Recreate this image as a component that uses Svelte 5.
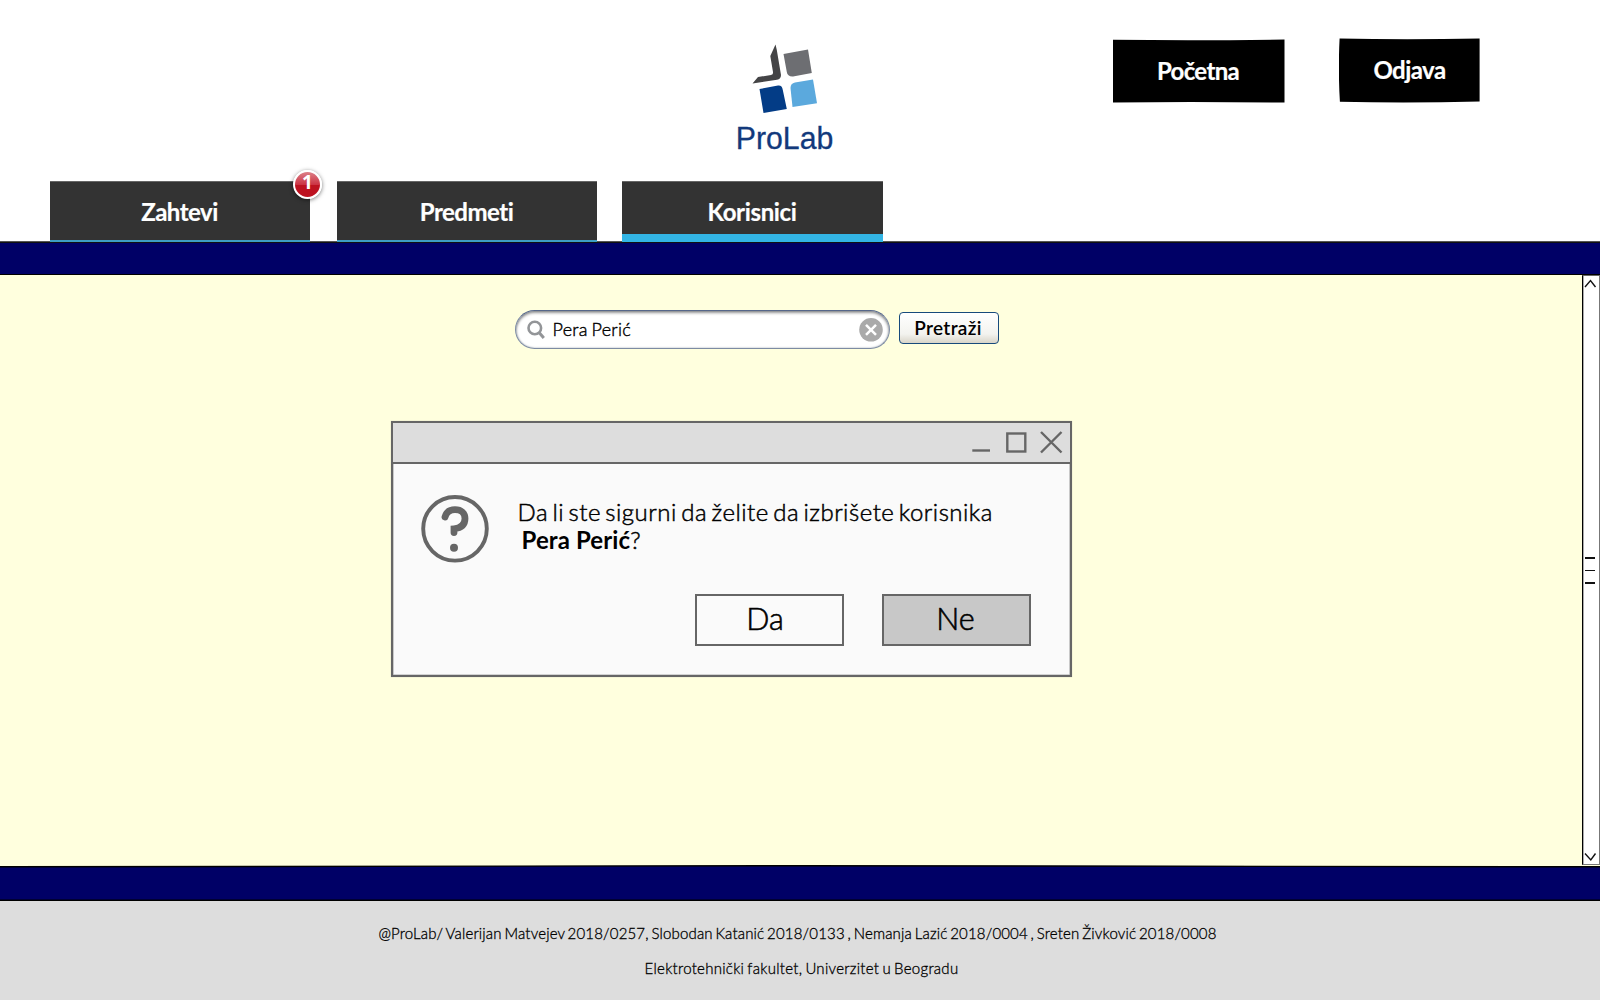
<script>
  const tabs = [
    { label: 'Zahtevi', badge: 1 },
    { label: 'Predmeti' },
    { label: 'Korisnici', active: true }
  ];
</script>

<div class="page">
  <header>
    <div class="top">
      <svg class="logo" width="130" height="130" viewBox="0 0 130 130">
        <path d="M55.5 14.5 56.8 20 61 45Q61 49 57 49.7L32.5 53.5 38 47 51 45Q53.5 44.5 53 42L50.3 26Z" fill="#444446" />
        <path d="M63.5 24 88 19.5 91.8 43 73 46.4Q67.5 46.7 66.8 42Z" fill="#6d6e72" />
        <path d="M39.5 59 58 55.6Q62 55 62.8 60L66.8 79 43.5 83Z" fill="#033c86" />
        <path d="M70.5 58Q70.5 53.5 75 52.6L93 49.6 97 73.3 72.5 77Z" fill="#5ba9dd" />
        <text x="15.8" y="118.8" textLength="97.5" lengthAdjust="spacingAndGlyphs">ProLab</text>
      </svg>
      <button class="home">
        <svg width="172" height="64" viewBox="0 0 172 64"><path d="M0 .8Q86 1.8 171.5 .5L171.5 63.6Q86 62.4 0 63.4Z" /></svg>
        <span>Početna</span>
      </button>
      <button class="logout">
        <svg width="142" height="66" viewBox="0 0 142 66"><path d="M.6 .5Q70 2 140.6 .4L140.6 63.5Q70 65.3 .9 63.8Q-1 32 .6 .5Z" /></svg>
        <span>Odjava</span>
      </button>
    </div>
    <nav>
      {#each tabs as tab}
        <div class="tab" class:active={tab.active}>
          <span>{tab.label}</span>
          {#if tab.badge}<b class="badge">{tab.badge}</b>{/if}
        </div>
      {/each}
    </nav>
  </header>

  <div class="band"></div>

  <main>
    <section class="content">
      <div class="search">
        <div class="field">
          <svg width="18" height="20" viewBox="0 0 18 20" fill="none" stroke="#939598">
            <circle cx="7.8" cy="8" r="6.3" stroke-width="2.6" />
            <path d="M12.3 12.7 16.8 18" stroke-width="3" />
          </svg>
          <span class="query">Pera Perić</span>
          <svg class="clear" width="24" height="24" viewBox="0 0 24 24">
            <circle cx="12" cy="11.8" r="11.8" fill="#aaa" />
            <path d="M7 6.8 17 16.8M17 6.8 7 16.8" stroke="#fff" stroke-width="2.5" />
          </svg>
        </div>
        <button class="go"><span>Pretraži</span></button>
      </div>

      <div class="dialog">
        <div class="titlebar">
          <svg width="92" height="26" viewBox="0 0 92 26" fill="none" stroke="#666" stroke-width="2.4">
            <path d="M.3 21.5H18" />
            <rect x="35.3" y="4.5" width="18" height="18" />
            <path d="M69 3 89.5 23.5M89.5 3 69 23.5" />
          </svg>
        </div>
        <div class="body">
          <svg class="question" width="68" height="68" viewBox="0 0 68 68" fill="none" stroke="#666">
            <circle cx="34" cy="33.8" r="31.8" stroke-width="3.9" />
            <path d="M24 22Q26 14.7 34 14.7C40.5 14.7 44 18.5 44 23.5C44 29.5 40 33 33 33.8V37.5" stroke-width="6.8" stroke-linecap="round" stroke-linejoin="miter" />
            <circle cx="33" cy="52.8" r="4" fill="#666" stroke="none" />
          </svg>
          <div class="message">
            <p class="ask">Da li ste sigurni da želite da izbrišete korisnika</p>
            <p class="who"><b>Pera Perić</b>?</p>
          </div>
        </div>
        <div class="actions">
          <button class="yes"><span>Da</span></button>
          <button class="chosen"><span>Ne</span></button>
        </div>
      </div>
    </section>
    <aside>
      <svg width="13" height="10" viewBox="0 0 13 10"><path d="M1 8 6.5 1.5 11.5 8" /></svg>
      <div class="grip"><i></i><i></i><i></i></div>
      <svg width="13" height="10" viewBox="0 0 13 10"><path d="M1 1.5 6.8 8 11.5 1.5" /></svg>
    </aside>
  </main>

  <svg class="lower" width="1600" height="36" viewBox="0 0 1600 36">
    <path d="M-2 1.8Q800 -.3 1602 1.8V35.3H-2Z" />
  </svg>

  <footer>
    <p class="authors">@ProLab/ Valerijan Matvejev 2018/0257, Slobodan Katanić 2018/0133 , Nemanja Lazić 2018/0004 , Sreten Živković 2018/0008</p>
    <p class="school">Elektrotehnički fakultet, Univerzitet u Beogradu</p>
  </footer>
</div>

<style>
  :global(body) { margin: 0; overflow: hidden; }
  * { box-sizing: border-box; }
  p { margin: 0; white-space: pre; }
  svg { display: block; flex: none; }
  button { font: inherit; margin: 0; padding: 0; border: 0; background: none; white-space: nowrap; }
  .page { width: 1600px; height: 1000px; display: flex; flex-direction: column; background: #fff; font-family: Lato, "Liberation Sans", sans-serif; font-variant-ligatures: none; color: #000; }

  header { height: 242px; flex: none; display: flex; flex-direction: column; background: linear-gradient(#555, #555) bottom / 100% 1px no-repeat; }
  .top { height: 181px; flex: none; display: flex; align-items: flex-start; padding: 30px 0 0 720px; }
  .logo text { font: 32px "Liberation Sans", sans-serif; fill: #12397c; stroke: #12397c; stroke-width: .3; }
  .home, .logout { display: grid; place-items: center; color: #fff; font-size: 24px; font-weight: 700; letter-spacing: -.65px; -webkit-text-stroke: .2px #fff; }
  .home > *, .logout > * { grid-area: 1 / 1; }
  .home span { padding: 0 2px 1px 0; }
  .logout span { padding-bottom: 3px; letter-spacing: -.55px; }
  .home { margin: 9px 0 0 263px; }
  .logout { margin: 8px 0 0 53.5px; }
  nav { display: flex; gap: 27px; padding-left: 50px; height: 61px; }
  .tab { position: relative; width: 260px; height: 61px; padding: 14.5px 1px 0 0; background: #333; color: #fff; border-top: 1px solid #666; border-bottom: 2px solid #3d9ec4; font-size: 24px; line-height: 29px; font-weight: 700; letter-spacing: -.5px; text-align: center; }
  .tab > span { -webkit-text-stroke: .2px #fff; }
  .tab.active { border-bottom: 8px solid #33b5e5; margin-left: -2px; width: 261px; letter-spacing: -.35px; }
  .badge { position: absolute; right: -12px; top: -12.5px; width: 29px; height: 29px; border: 2.5px solid #fff; border-radius: 50%; background: linear-gradient(#dc8088, #cc3444 50%, #bd1220 51%, #bd1220); box-shadow: 0 1px 4px #0008; font: 700 19px/21px "Open Sans", sans-serif; letter-spacing: 0; }

  .band { flex: none; height: 33px; background: #006; border: solid #111; border-width: 1px 0; border-bottom-color: #000; }
  .lower { background: #ffffde; }
  .lower path { fill: #006; stroke: #000; stroke-width: 1.4; }
  main { height: 590px; flex: none; display: flex; background: #ffffde; }
  .content { width: 1582px; padding: 35px 0 0 391px; }
  .search { display: flex; align-items: center; gap: 9px; padding-left: 124px; height: 39px; }
  .field { width: 375px; height: 39px; display: flex; align-items: center; padding: 0 6px 0 11px; background: #fff; border: 1.5px solid #7d8ba3; border-top-color: #56678a; border-radius: 20px; box-shadow: inset 0 2px 3px #0006, inset 0 0 2px #5678; }
  .query { font-size: 18px; font-weight: 300; -webkit-text-stroke: .4px #000; margin-left: 7.5px; padding-bottom: 1.5px; letter-spacing: .3px; word-spacing: -1.5px; }
  .clear { margin-left: auto; }
  .go { width: 100px; height: 32px; margin-top: -3px; padding: 0 2px 2px 0; border: 1.5px solid #174a7c; border-radius: 4px; background: linear-gradient(#fff, #f3f3ef 70%, #d9d5c9); font-size: 19px; font-weight: 600; letter-spacing: .35px; }

  .dialog { width: 681px; height: 256px; margin-top: 72px; background: #fafafa; border: 2px solid #666; box-shadow: inset 0 0 0 .6px #6668, 0 0 1px #6666; }
  .titlebar { height: 41px; display: flex; justify-content: flex-end; padding: 6px 6px 0 0; background: #ddd; border-bottom: 2px solid #666; }
  .body { display: flex; height: 130px; padding: 31px 0 0 28px; }
  .message { padding: 2px 0 0 28.5px; font-size: 24px; line-height: 29px; font-weight: 300; -webkit-text-stroke: .5px #000; }
  .ask { letter-spacing: .5px; word-spacing: -2.6px; }
  .who { padding-left: 4px; font-size: 24px; margin-top: -1px; }
  .who b { font-weight: 700; letter-spacing: .1px; -webkit-text-stroke: 0; }
  .actions { display: flex; justify-content: flex-end; gap: 38px; padding-right: 39px; }
  .actions button { width: 149px; height: 52px; border: 2px solid #666; font-size: 30.5px; font-weight: 300; -webkit-text-stroke: .6px #000; padding: 0 2px 4px 0; }
  .actions .yes { padding-right: 9px; }
  .actions .chosen { background: #c8c8c8; }

  aside { width: 18px; display: flex; flex-direction: column; justify-content: space-between; align-items: center; padding: 3px 2px 2px 0; background: #fff; border: solid #000; border-width: 1px; border-top-color: #666; border-right-color: #777; border-bottom-color: #777; box-shadow: inset 1px 0 #aaa; }
  aside svg { fill: none; stroke: #111; stroke-width: 1.4; }
  .grip { display: flex; flex-direction: column; gap: 11px; }
  .grip i { width: 10px; height: 1.5px; background: #111; }

  footer { flex: 1; background: #ddd; text-align: center; font-size: 15px; line-height: 18px; padding-top: 23px; color: #000; font-weight: 300; -webkit-text-stroke: .3px #000; }
  footer p + p { margin-top: 17px; }
  .authors { margin-right: 5px; letter-spacing: .17px; word-spacing: -1.5px; }
  .school { margin-right: 0; padding-left: 3px; letter-spacing: .28px; word-spacing: -1.2px; }
</style>
